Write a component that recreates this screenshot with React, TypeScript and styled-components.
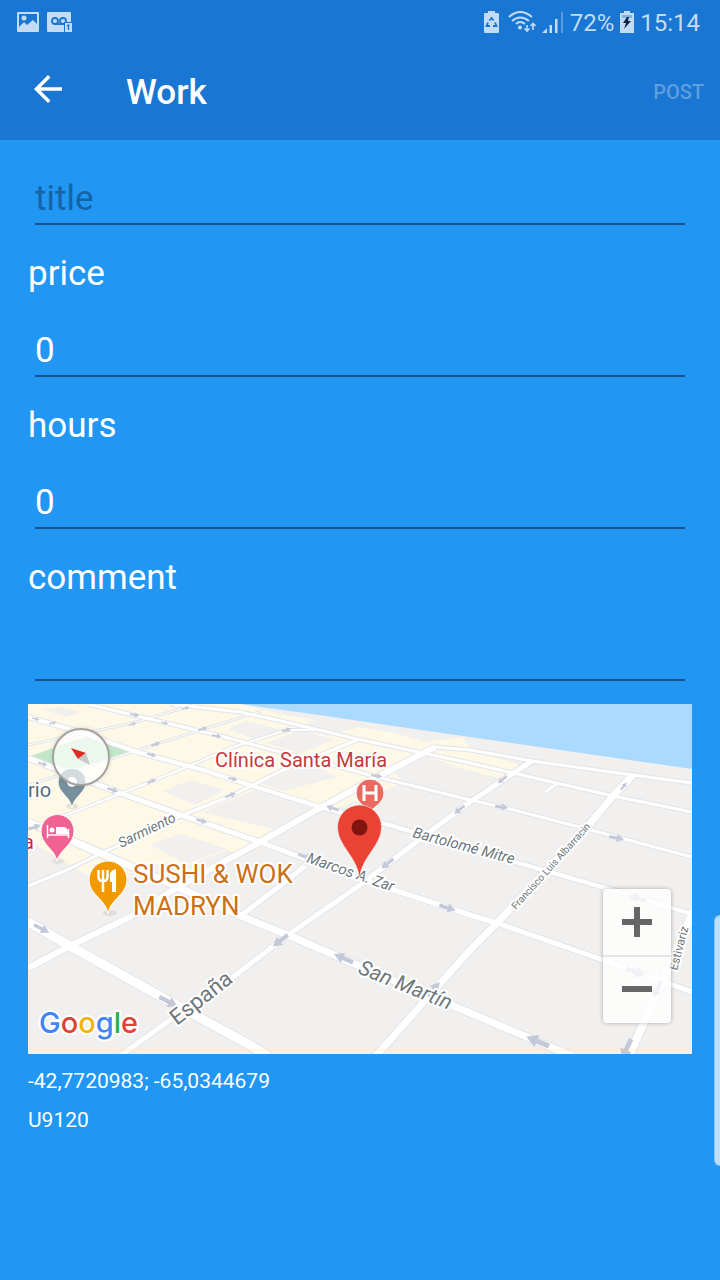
import React from "react";
import styled, { createGlobalStyle } from "styled-components";
import { MdArrowBack } from "react-icons/md";

const GlobalStyle = createGlobalStyle`
  *, *::before, *::after { box-sizing: border-box; }
  body {
    margin: 0;
    background: #2196f3;
    font-family: Roboto, "Liberation Sans", sans-serif;
    color: #fff;
  }
`;

const Screen = styled.div`
  position: relative;
  min-height: 100vh;
`;

const Header = styled.header`
  background: #1976d2;
`;

const StatusBar = styled.div`
  display: flex;
  justify-content: space-between;
  align-items: center;
  height: 44px;
  padding: 0 20px 0 17px;
  color: #c3dcf5;
  font-size: 24px;
  line-height: 30px;
`;

const StatusGroup = styled.div<{ $gap: number }>`
  display: flex;
  align-items: center;
  gap: ${(p) => p.$gap}px;
`;

const StatusText = styled.span`
  padding-top: 2px;
`;

const StatusIcon = styled.svg`
  display: block;
  flex: none;
`;

const AppBar = styled.div`
  display: flex;
  align-items: center;
  height: 96px;
  padding: 0 16px 4px 27px;
`;

const BackButton = styled.button`
  display: flex;
  padding: 0 0 2px;
  border: 0;
  background: none;
  color: #fff;
  font-size: 42px;
`;

const Title = styled.h1`
  flex: 1;
  margin: 0 0 0 57px;
  padding-top: 6px;
  font-size: 35px;
  line-height: 42px;
  font-weight: 500;
`;

const PostButton = styled.button`
  padding: 4px 0 0;
  border: 0;
  background: none;
  color: #5e9fe0;
  font-family: inherit;
  font-size: 20px;
  line-height: 24px;
  font-weight: 500;
`;

const Form = styled.form`
  padding: 31px 28px 0;
`;

const Label = styled.label`
  display: block;
  margin: 28px 0;
  font-size: 35px;
  line-height: 42px;
`;

const Field = styled.div`
  display: flex;
  padding: 0 7px;
`;

const TextInput = styled.input`
  flex: 1;
  min-width: 0;
  height: 54px;
  padding: 2px 0 0;
  border: 0;
  border-bottom: 2px solid #14558e;
  border-radius: 0;
  outline: none;
  background: none;
  color: #fff;
  font-family: inherit;
  font-size: 35px;
  line-height: 42px;
  &::placeholder {
    color: #1464a6;
    opacity: 1;
  }
`;

const MapFrame = styled.section`
  position: relative;
  height: 350px;
  margin-top: 23px;
  overflow: hidden;
  background: #f1f0ef;
`;

const MapDrawing = styled.svg`
  display: block;
  width: 100%;
  height: 100%;
  text {
    font-family: Roboto, "Liberation Sans", sans-serif;
    paint-order: stroke;
    stroke: #fff;
    stroke-width: 4px;
    stroke-linejoin: round;
  }
  text.brand {
    font-family: Inter, "Liberation Sans", sans-serif;
    font-weight: 500;
  }
`;

const Compass = styled.button`
  position: absolute;
  top: 24px;
  left: 24px;
  width: 58px;
  height: 58px;
  padding: 0;
  border: 2px solid #a5a39f;
  border-radius: 50%;
  background: rgba(255, 255, 255, 0.68);
  box-shadow: 0 0 4px rgba(0, 0, 0, 0.15);
  svg {
    display: block;
  }
`;

const ZoomControls = styled.div`
  position: absolute;
  right: 21px;
  bottom: 31px;
  display: flex;
  flex-direction: column;
  width: 68px;
  border-radius: 4px;
  background: rgba(255, 255, 255, 0.76);
  box-shadow: 0 0 4px rgba(0, 0, 0, 0.3);
`;

const ZoomButton = styled.button`
  display: flex;
  align-items: center;
  justify-content: center;
  height: 66px;
  padding: 0;
  border: 0;
  background: none;
  color: #666;
  & + & {
    height: 68px;
    padding-bottom: 2px;
    border-top: 2px solid #e6e5e5;
  }
`;

const Details = styled.div`
  padding: 15px 28px 0;
  font-size: 21px;
  line-height: 25px;
`;

const Detail = styled.p`
  margin: 0 0 14px;
`;

const EdgeHandle = styled.div`
  position: absolute;
  top: 915px;
  right: 0;
  width: 6px;
  height: 251px;
  border: 1px solid #8cc2f0;
  border-right: 0;
  border-radius: 6px 0 0 6px;
  background: #bedffa;
`;

type Street = { d: string; w: number };

const streets: Street[] = [
  { d: "M28 785 L92 765 L160 743 L207 728 L262 711", w: 1 },
  { d: "M28 745 L133 723 L187 707 L196 704", w: 1 },
  { d: "M28 829 L87 807 L150 782 L187 767 L233 747 L287 730 L325 730", w: 2 },
  { d: "M87 704 L133 715 L217 735 L280 752 L340 767 L377 777 L470 800 L502 807 L583 828 L617 837 L692 857", w: 3 },
  { d: "M28 717 L83 733 L137 752 L203 770 L253 786 L320 807 L382 823 L413 832 L470 849 L553 873 L630 895 L692 914", w: 4 },
  { d: "M170 704 L240 712 L277 720 L357 739 L423 753 L470 763 L513 773 L613 796 L692 812", w: 3 },
  { d: "M435 747 L470 750 L532 761 L633 775 L692 783", w: 3 },
  { d: "M28 886 L67 870 L100 854 L183 815 L233 795 L283 770 L357 740", w: 3 },
  { d: "M28 758 L120 793 L187 817 L260 842 L300 857 L363 880 L403 893 L470 915 L497 923 L603 960 L692 992", w: 5 },
  { d: "M28 822 L77 843 L178 887 L243 917 L288 935 L350 962 L470 1013 L572 1056", w: 7 },
  { d: "M238 918 L277 888 L305 866", w: 5 },
  { d: "M545 792 L558 783", w: 3 },
  { d: "M28 968 L70 946 L130 917 L178 887 L260 842 L320 808 L353 790 L423 753 L435 747", w: 6 },
  { d: "M120 1056 L170 1020 L233 977 L288 935 L360 885 L423 837 L470 802 L532 761", w: 5 },
  { d: "M374 1058 L470 950 L497 923 L547 870 L587 827 L613 796 L633 775", w: 7 },
  { d: "M28 922 L70 946 L167 1000 L250 1045 L268 1056", w: 9 },
  { d: "M628 1058 L663 980 L694 910", w: 8 },
];

// Position, heading and scale of each one-way arrow
const arrows: number[][] = [
  [42, 929, 28, 0.9], [169, 1002, 28, 1.1], [280, 941, 142, 1], [343, 958, 204, 1.1],
  [434, 989, -50, 1], [448, 908, 18, 0.9], [537, 1041, 203, 1.3], [636, 972, 18, 1.1],
  [637, 898, 198, 1], [657, 990, 115, 1], [626, 1050, 115, 1.2], [387, 864, 142, 0.8],
  [306, 857, 20, 0.8], [332, 808, 198, 0.7], [377, 776, 8, 0.6], [502, 807, 8, 0.7],
  [617, 838, 10, 0.8], [624, 786, -50, 0.5], [502, 780, 142, 0.6], [459, 810, 142, 0.7],
  [202, 821, 15, 0.6], [233, 779, 12, 0.5], [113, 790, 15, 0.6], [43, 764, 15, 0.5],
  [152, 781, -22, 0.5], [231, 795, -22, 0.6], [156, 744, -18, 0.5], [203, 729, -18, 0.5],
  [217, 736, 10, 0.5], [165, 723, 10, 0.4], [135, 715, 10, 0.5], [152, 755, 15, 0.5],
  [133, 724, -15, 0.4], [186, 708, -15, 0.4], [287, 730, -15, 0.5], [53, 723, -15, 0.4],
  [35, 827, -18, 0.7], [36, 719, 15, 0.4],
];

const CityMap = () => (
  <MapDrawing viewBox="28 704 664 350" preserveAspectRatio="xMidYMid slice" role="img" aria-label="Map of Madryn">
    <rect x="28" y="704" width="664" height="350" fill="#f1f0ef" />
    <path fill="#fef8e6" d="M28 704 H240 L280 714 L314 720 L300 728 L328 736 L357 727 L392 732 L425 742 L462 737 L470 748 L519 765 L503 779 L460 768 L433 766 L398 785 L338 808 L318 807 L276 830 L240 856 L228 850 L185 866 L165 862 L110 880 L95 880 L28 840 Z" />
    <g fill="#f1f0ef">
      <path d="M43 709 L61 707 L81 712 L66 717Z" />
      <path d="M163 791 L190 780 L225 790 L195 805Z" />
      <path d="M201 812 L258 789 L318 807 L275 829Z" />
      <path d="M228 729 L246 721 L286 731 L258 741Z" />
      <path d="M266 743 L301 730 L335 740 L300 753Z" />
      <path d="M262 784 L308 762 L337 777 L283 791Z" />
      <path d="M392 770 L425 756 L455 766 L405 785Z" />
      <path d="M150 844 L181 834 L228 849 L185 864Z" />
    </g>
    <path d="M28 757 L72 741 L90 737 L133 751 L82 768 L50 768Z" fill="#c3e8c9" />
    <path d="M240 704 L333 717 L373 723 L470 737 L692 769 V704Z" fill="#aadaff" />
    <g fill="none" stroke="#e3e4ea" strokeLinejoin="round">
      {streets.map((s) => <path key={s.d} d={s.d} strokeWidth={s.w + 2} />)}
    </g>
    <g fill="none" stroke="#fff" strokeLinejoin="round">
      {streets.map((s) => <path key={s.d} d={s.d} strokeWidth={s.w} />)}
    </g>
    <g fill="#c4c9da">
      {arrows.map(([x, y, a, s]) => (
        <path key={`${x}-${y}`} transform={`translate(${x} ${y}) rotate(${a}) scale(${s})`} d="M-10 -2 H0 V-5 L9 0 L0 5 V2 H-10Z" />
      ))}
    </g>
    <g fill="#6f777b">
      <text transform="translate(121 848) rotate(-26)" fontSize="14" fontStyle="italic">Sarmiento</text>
      <text transform="translate(306 862) rotate(19)" fontSize="15" fontStyle="italic">Marcos A. Zar</text>
      <text transform="translate(412 837) rotate(15)" fontSize="15" fontStyle="italic">Bartolomé Mitre</text>
      <text transform="translate(516 910) rotate(-48)" fontSize="10">Francisco Luis Albarracin</text>
      <text transform="translate(177 1026) rotate(-38)" fontSize="22">España</text>
      <text transform="translate(357 973) rotate(22)" fontSize="21" fontStyle="italic">San Martín</text>
      <text transform="translate(677 971) rotate(-75)" fontSize="12">Estivariz</text>
    </g>
    <g>
      <ellipse cx="72" cy="806" rx="6" ry="3" fill="#e6e1d6" />
      <path d="M72 808 C70 796 58 793 58 782 A14 14 0 0 1 86 782 C86 793 74 796 72 808Z" fill="#78909c" stroke="#fff" />
      <circle cx="72" cy="782" r="5" fill="#fff" />
    </g>
    <g>
      <ellipse cx="58" cy="861" rx="6" ry="3" fill="#e4e2df" />
      <path d="M57 861 C55 849 41 845 41 831 A16.500 16.500 0 0 1 74 831 C74 845 60 849 57 861Z" fill="#f06292" stroke="#fff" />
      <path d="M47.500 825 V838 M47.500 835 H68.500 V838 M68.500 835 V829" fill="none" stroke="#fff" strokeWidth="1.500" />
      <circle cx="52" cy="830" r="2.500" fill="#fff" />
      <path d="M56 827 H64 Q68 828 68 832 V834 H56Z" fill="#fff" />
    </g>
    <g>
      <ellipse cx="110" cy="913" rx="7" ry="3" fill="#dfdddb" />
      <path d="M108 914 C106 899 89 895 89 880 A19 19 0 0 1 127 880 C127 895 110 899 108 914Z" fill="#f29900" stroke="#fff" />
      <path d="M98.500 870 V877 Q98.500 881 103 881 Q107.500 881 107.500 877 V870 M103 870 V892" fill="none" stroke="#fff" strokeWidth="2.500" />
      <path d="M112 892 V882 H110 V874 Q111 870 116 869 V892Z" fill="#fff" />
    </g>
    <g>
      <path d="M370 813 C368 807 356 804 356 793 A14 14 0 0 1 384 793 C384 804 372 807 370 813Z" fill="#ea6a60" stroke="#fff" />
      <path d="M364 785 V801 M376 785 V801 M364 793 H376" stroke="#fff" strokeWidth="3" />
    </g>
    <path d="M359.500 878 C357 856 337.500 846 337.500 827 A22 22 0 0 1 381.500 827 C381.500 846 362 856 359.500 878Z" fill="#ea4335" stroke="#fff" strokeWidth="0.500" />
    <circle cx="359.500" cy="827.500" r="8" fill="#811411" />
    <text x="215" y="767" fontSize="20" fill="#c5393b">Clínica Santa María</text>
    <text x="28" y="797" fontSize="20" fill="#546e7a">rio</text>
    <text x="23" y="849" fontSize="20" fill="#d81b60">a</text>
    <text x="133" y="883" fontSize="26" fill="#cb7014">SUSHI &amp; WOK</text>
    <text x="133" y="915" fontSize="26" fill="#cb7014">MADRYN</text>
    <text className="brand" x="39" y="1033" fontSize="29">
      <tspan fill="#4285f4">G</tspan><tspan fill="#db4437">o</tspan><tspan fill="#f4b400">o</tspan>
      <tspan fill="#4285f4">g</tspan><tspan fill="#34a853">l</tspan><tspan fill="#db4437">e</tspan>
    </text>
  </MapDrawing>
);

const ImageIcon = () => (
  <StatusIcon width="22" height="20" viewBox="0 0 22 20">
    <path fillRule="evenodd" fill="currentColor" d="M1 0H21Q22 0 22 1V19Q22 20 21 20H1Q0 20 0 19V1Q0 0 1 0ZM2 2V15L7 10L10 13L16 8L20 12V2Z" />
    <circle cx="7" cy="6" r="2.500" fill="currentColor" />
  </StatusIcon>
);

const VoicemailIcon = () => (
  <StatusIcon width="26" height="20" viewBox="0 0 26 20">
    <rect width="24" height="20" rx="1" fill="currentColor" />
    <g fill="none" stroke="#1976d2" strokeWidth="1.800">
      <circle cx="8" cy="9" r="3" />
      <circle cx="16" cy="9" r="3" />
      <path d="M8 12H18" />
    </g>
    <rect x="17.500" y="10.500" width="8" height="10" fill="currentColor" stroke="#1976d2" />
    <path d="M20 14L21.500 13V18" fill="none" stroke="#1976d2" strokeWidth="1.400" />
  </StatusIcon>
);

const RecycleBatteryIcon = () => (
  <StatusIcon width="15" height="22" viewBox="0 0 15 22">
    <path d="M4 0H11V2H14Q15 2 15 3V21Q15 22 14 22H1Q0 22 0 21V3Q0 2 1 2H4Z" fill="currentColor" />
    <g fill="none" stroke="#1976d2" strokeWidth="1.800">
      <path d="M5.500 9.500L7.500 7L9.500 9.500" />
      <path d="M11 11.500L12.500 15H9" />
      <path d="M4 11.500L2.500 15H6" />
    </g>
  </StatusIcon>
);

const WifiIcon = () => (
  <StatusIcon width="28" height="22" viewBox="0 0 28 22">
    <g fill="none" stroke="currentColor" strokeWidth="2">
      <path d="M1 6Q12 -4 24 6" />
      <path d="M4 10Q12 3 21 10" />
      <path d="M8 13Q12 9 17 13" />
      <path d="M19 14V20M16.500 17.500L19 20L21.500 17.500M25 19V12M22.500 15L25 12.500L27.500 15" strokeWidth="1.600" />
    </g>
    <circle cx="12" cy="16.500" r="2" fill="currentColor" />
  </StatusIcon>
);

const SignalIcon = () => (
  <StatusIcon width="22" height="22" viewBox="0 0 22 22">
    <path d="M0 22L5 17V22ZM7.500 14H10V22H7.500ZM13 8H15.500V22H13Z" fill="currentColor" />
    <path d="M19 2L21 0V22H19Z" fill="#5b9ce0" />
  </StatusIcon>
);

const ChargingIcon = () => (
  <StatusIcon width="14" height="22" viewBox="0 0 14 22">
    <path d="M4 0H10V2H14V22H0V2H4Z" fill="currentColor" />
    <path d="M2 4H12V7H2Z" fill="#7db2e6" />
    <path d="M7 6L3 12H6L4 18L11 10H8L9 6Z" fill="#0b2748" />
  </StatusIcon>
);

export default function App() {
  return (
    <Screen>
      <GlobalStyle />
      <Header>
        <StatusBar>
          <StatusGroup $gap={8}>
            <ImageIcon />
            <VoicemailIcon />
          </StatusGroup>
          <StatusGroup $gap={6}>
            <StatusGroup $gap={9}>
              <RecycleBatteryIcon />
              <WifiIcon />
            </StatusGroup>
            <SignalIcon />
            <StatusText>72%</StatusText>
            <ChargingIcon />
            <StatusText as="time">15:14</StatusText>
          </StatusGroup>
        </StatusBar>
        <AppBar>
          <BackButton type="button" aria-label="Back"><MdArrowBack /></BackButton>
          <Title>Work</Title>
          <PostButton type="submit" form="work-form">POST</PostButton>
        </AppBar>
      </Header>
      <main>
        <Form id="work-form" onSubmit={(e) => e.preventDefault()}>
          <Field><TextInput aria-label="title" placeholder="title" /></Field>
          <Label htmlFor="price">price</Label>
          <Field><TextInput id="price" inputMode="decimal" defaultValue="0" /></Field>
          <Label htmlFor="hours">hours</Label>
          <Field><TextInput id="hours" inputMode="decimal" defaultValue="0" /></Field>
          <Label htmlFor="comment">comment</Label>
          <Field><TextInput id="comment" /></Field>
          <MapFrame>
            <CityMap />
            <Compass type="button" aria-label="Reset north">
              <svg width="54" height="54" viewBox="0 0 54 54">
                <path d="M17 18L32 23L24 29Z" fill="#dd2c24" />
                <path d="M32 23L36 35L24 29Z" fill="#c9c9c7" />
              </svg>
            </Compass>
            <ZoomControls>
              <ZoomButton type="button" aria-label="Zoom in">
                <svg width="30" height="30" viewBox="0 0 30 30"><path d="M0 15H30M15 0V30" stroke="currentColor" strokeWidth="6" /></svg>
              </ZoomButton>
              <ZoomButton type="button" aria-label="Zoom out">
                <svg width="30" height="30" viewBox="0 0 30 30"><path d="M0 15H30" stroke="currentColor" strokeWidth="6" /></svg>
              </ZoomButton>
            </ZoomControls>
          </MapFrame>
        </Form>
        <Details>
          <Detail>-42,7720983; -65,0344679</Detail>
          <Detail>U9120</Detail>
        </Details>
      </main>
      <EdgeHandle />
    </Screen>
  );
}
